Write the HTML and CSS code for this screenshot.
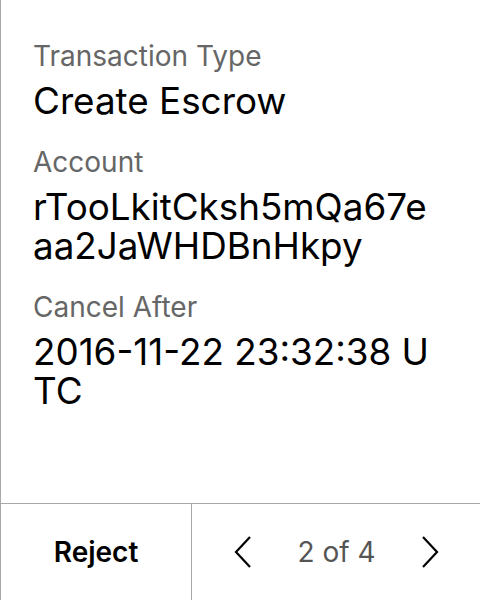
FILE: index.html
```html
<!DOCTYPE html>
<html>
<head>
<meta charset="utf-8">
<link rel="stylesheet" href="styles.css">
</head>
<body>
<div class="screen">
  <main class="details">
    <div class="field">
      <div class="label">Transaction Type</div>
      <div class="value">Create Escrow</div>
    </div>
    <div class="field">
      <div class="label">Account</div>
      <div class="value">rTooLkitCksh5mQa67eaa2JaWHDBnHkpy</div>
    </div>
    <div class="field">
      <div class="label">Cancel After</div>
      <div class="value">2016-11-22 23:32:38 UTC</div>
    </div>
  </main>
  <footer class="footer">
    <div class="reject">Reject</div>
    <div class="pager">
      <svg class="chev" width="18" height="32" viewBox="0 0 18 32"><polyline points="16,1 2,16 16,31" fill="none" stroke="#000" stroke-width="2.2"/></svg>
      <span class="count">2 of 4</span>
      <svg class="chev" width="18" height="32" viewBox="0 0 18 32"><polyline points="2,1 16,16 2,31" fill="none" stroke="#000" stroke-width="2.2"/></svg>
    </div>
  </footer>
</div>
</body>
</html>
```
FILE: styles.css
```css
html, body {
  margin: 0;
  padding: 0;
  background: #fff;
}
body {
  font-family: Inter, "Noto Sans", sans-serif;
  color: #000;
}
.screen {
  width: 480px;
  height: 600px;
  display: flex;
  flex-direction: column;
  border-left: 1px solid #a8a8a8;
  box-sizing: border-box;
}
.details {
  flex: 1;
  padding: 39px 37px 0 32px;
  display: flex;
  flex-direction: column;
  gap: 25px;
}
.label {
  font-size: 28px;
  line-height: 35px;
  color: #666;
}
.value {
  font-size: 36.8px;
  line-height: 39px;
  margin-top: 7px;
  word-break: break-all;
}
.footer {
  height: 96px;
  border-top: 1px solid #a8a8a8;
  display: grid;
  grid-template-columns: 191px 1fr;
}
.reject {
  display: flex;
  align-items: center;
  justify-content: center;
  font-size: 28px;
  font-weight: 600;
  border-right: 1px solid #a8a8a8;
}
.pager {
  display: flex;
  align-items: center;
  justify-content: space-between;
  padding: 0 41px 0 42px;
}
.count {
  font-size: 28px;
  color: #555;
}
.chev {
  display: block;
}
```
